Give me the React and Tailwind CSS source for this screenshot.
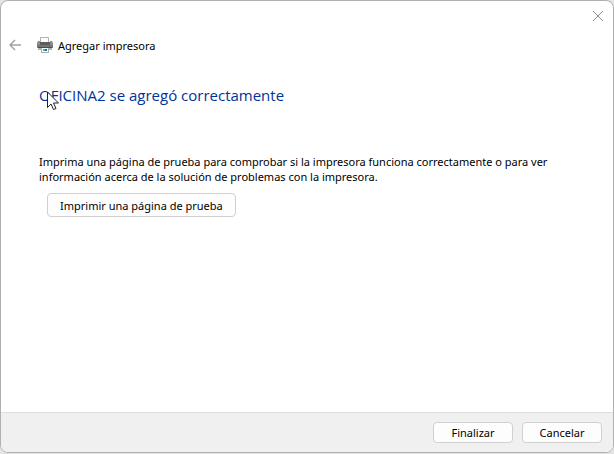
import { useState } from "react";

const PrinterIcon = () => (
  <svg className="h-4 w-4 shrink-0" viewBox="0 0 16 16" fill="none" aria-hidden="true">
    <path d="M3.5.5h8v6h-8z" fill="#ffffff" stroke="#b0b0b0" />
    <path d="M1 4h2v2h10V4h2l1 2v5H0V6z" fill="#8c8c8c" />
    <path d="M3 5h10v3H3z" fill="#5c5c5c" />
    <path d="M0 8h16v2H0z" fill="#747474" />
    <path d="M1 10h14v1H1z" fill="#4c4c4c" />
    <path d="M1 11h14v2H1z" fill="#b4b4b4" />
    <path d="M4 11h8v5H4z" fill="#a8b2b6" />
    <path d="M5 11h6v4H5z" fill="#f8fcfd" />
    <path d="M6 12h2v2H6z" fill="#4fb3a9" />
    <path d="M8 12h2v2H8z" fill="#1f68ac" />
  </svg>
);

const BackIcon = () => (
  <svg className="h-3 w-3" viewBox="0 0 12 12" fill="none" stroke="#a3a3a3" strokeWidth="1.5" aria-hidden="true">
    <path d="M12 6H1M6 1L1 6l5 5" />
  </svg>
);

const CloseIcon = () => (
  <svg className="h-3 w-3" viewBox="0 0 12 12" fill="none" stroke="#8c8c8c" aria-hidden="true">
    <path d="M1 1l10 10M11 1L1 11" />
  </svg>
);

const Cursor = () => (
  <svg className="pointer-events-none absolute top-2 left-2 h-5 w-3" viewBox="0 0 12 20" aria-hidden="true">
    <path d="M.5 1v15.5L4 13l2.5 5.5 2.5-1L6.5 12h5z" fill="#ffffff" stroke="#222222" />
  </svg>
);

const DialogButton = ({ className = "", children, ...props }) => (
  <button
    type="button"
    className={`flex items-center justify-center rounded border border-[#d0d0d0] bg-[#fdfdfd] hover:bg-[#f3f8fc] ${className}`}
    {...props}
  >
    {children}
  </button>
);

const App = () => {
  const [open, setOpen] = useState(true);

  return (
    <div className="flex h-screen flex-col bg-[#e4e4e4] pb-px font-['Noto_Sans','Open_Sans',sans-serif] text-[11px] leading-[15px] text-black">
      {open && (
        <div
          role="dialog"
          aria-labelledby="dialog-title"
          className="flex flex-1 flex-col overflow-hidden rounded-lg border border-[#b0b0b0] bg-white"
        >
          <div className="flex justify-end px-2 pt-2">
            <button type="button" aria-label="Cerrar" className="p-px" onClick={() => setOpen(false)}>
              <CloseIcon />
            </button>
          </div>

          <header className="mt-[14px] flex items-center px-2">
            <button type="button" aria-label="Atrás" disabled>
              <BackIcon />
            </button>
            <div className="ml-4 flex items-center gap-[5px]">
              <PrinterIcon />
              <span id="dialog-title">Agregar impresora</span>
            </div>
          </header>

          <main className="flex-1 px-[38px] pt-[30px]">
            <div className="relative">
              <h1 className="font-['Open_Sans',sans-serif] text-[15px] leading-6 text-[#003399]">
                OFICINA2 se agregó correctamente
              </h1>
              <Cursor />
            </div>
            <p className="mt-[47px] max-w-[530px]">
              Imprima una página de prueba para comprobar si la impresora funciona correctamente o para ver
              información acerca de la solución de problemas con la impresora.
            </p>
            <DialogButton className="mt-[9px] ml-2 h-6 px-3">Imprimir una página de prueba</DialogButton>
          </main>

          <footer className="flex justify-end gap-[9px] border-t border-[#dfdfdf] bg-[#f0f0f0] px-[11px] py-[9px]">
            <DialogButton className="h-[21px] w-20" onClick={() => setOpen(false)}>
              Finalizar
            </DialogButton>
            <DialogButton className="h-[21px] w-20" onClick={() => setOpen(false)}>
              Cancelar
            </DialogButton>
          </footer>
        </div>
      )}
    </div>
  );
};

export default App;
